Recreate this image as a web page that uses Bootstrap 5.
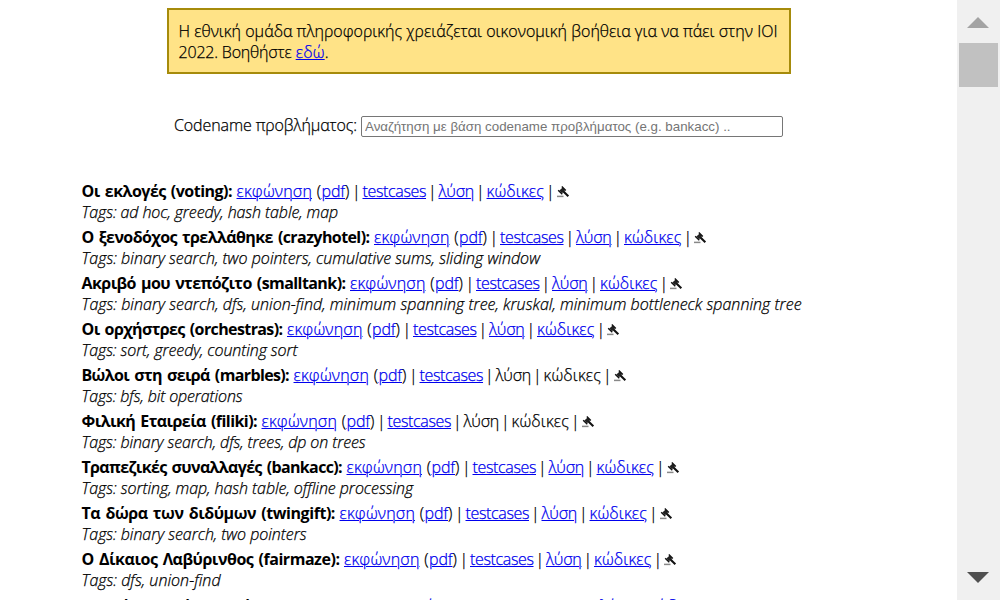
<!DOCTYPE html>
<html lang="el">
<head>
<meta charset="utf-8">
<title>Προβλήματα</title>
<meta name="viewport" content="width=device-width, initial-scale=1">
<link href="https://cdn.jsdelivr.net/npm/bootstrap@5.3.0/dist/css/bootstrap.min.css" rel="stylesheet">
<style>
body{font:300 16px/21px "Open Sans","Noto Sans",sans-serif;color:#000;background:#fff;-webkit-text-stroke:.25px}
.page{height:600px}
.content-area{width:957px}
.notice{width:624px;height:66px;margin:8px 0 0 167px;border:2px solid #a68b0b;background:#ffe387;padding:11px 9.5px}
a{color:#00e;text-underline-offset:1px;text-decoration-thickness:1px}
.fit{display:inline-block;white-space:pre}
.sep{display:inline-block;text-align:center;width:12.5px}
.search{margin:41px 0 0 174px;height:23px}
.search input{width:422px;height:21px;border:1px solid #767676;border-radius:2px;margin-top:1px;padding:1px 3px;font:13.333px "Liberation Sans",sans-serif;color:#000;-webkit-text-stroke:0}
.search input::placeholder{color:#757575;opacity:1}
.problems{margin:43px 0 0 81.5px}
.problems li{height:46px}
.problems li:last-child{padding-top:1px}
.line{height:21px}
.line b{font-weight:700;word-spacing:1.5px;-webkit-text-stroke:0}
.tags{height:21px;font-style:italic}
.gavel{width:13px;height:12px;margin:5px 0 0 0}
.bar{width:43px;background:#f0f0f0;padding:17px 0}
.arrow{margin-right:1px}
.thumb{width:39px;height:44px;background:#c1c1c1;margin-top:15px}
</style>
</head>
<body>
<div class="page d-flex overflow-hidden">
  <main class="content-area flex-shrink-0">
    <div class="notice"><span class="fit" data-w="599">Η εθνική ομάδα πληροφορικής χρειάζεται οικονομική βοήθεια για να πάει στην ΙΟΙ</span><br><span class="fit" data-w="113">2022. Βοηθήστε</span> <a href="#" class="fit" data-w="29">εδώ</a>.</div>
    <div class="search d-flex"><label class="fit" for="q" data-w="183">Codename προβλήματος:</label><input id="q" class="ms-1" placeholder="Αναζήτηση με βάση codename προβλήματος (e.g. bankacc) .."></div>
    <ul id="problems" class="problems list-unstyled mb-0"></ul>
  </main>
  <div class="bar d-flex flex-column align-items-center flex-shrink-0">
    <svg class="arrow" width="22" height="11" viewBox="0 0 22 11"><path d="M0 11L11 0L22 11Z" fill="#a3a3a3"/></svg>
    <div class="thumb"></div>
    <svg class="arrow mt-auto" width="22" height="11" viewBox="0 0 22 11"><path d="M0 0H22L11 11Z" fill="#505050"/></svg>
  </div>
</div>
<script src="https://cdn.jsdelivr.net/npm/bootstrap@5.3.0/dist/js/bootstrap.bundle.min.js"></script>
<script>
// title, title width, tags, tags width, has solution links
const rows = [
 ["Οι εκλογές (voting):",150.5,"Tags: ad hoc, greedy, hash table, map",256.5,1],
 ["Ο ξενοδόχος τρελλάθηκε (crazyhotel):",288,"Tags: binary search, two pointers, cumulative sums, sliding window",458.5,1],
 ["Ακριβό μου ντεπόζιτο (smalltank):",264,"Tags: binary search, dfs, union-find, minimum spanning tree, kruskal, minimum bottleneck spanning tree",720,1],
 ["Οι ορχήστρες (orchestras):",201,"Tags: sort, greedy, counting sort",216,1],
 ["Βώλοι στη σειρά (marbles):",207.5,"Tags: bfs, bit operations",161,0],
 ["Φιλική Εταιρεία (filiki):",175.5,"Tags: binary search, dfs, trees, dp on trees",284,0],
 ["Τραπεζικές συναλλαγές (bankacc):",260.5,"Tags: sorting, map, hash table, offline processing",331.5,1],
 ["Τα δώρα των διδύμων (twingift):",253.5,"Tags: binary search, two pointers",225,1],
 ["Ο Δίκαιος Λαβύρινθος (fairmaze):",258,"Tags: dfs, union-find",139,1],
 ["Το διάσημο δίκτυο φίλων (bestfriendlk):",311.5,"Tags: dp",60,1]
];
const gavel = '<svg class="gavel" viewBox="0 0 13 12"><path d="M0 10.4H6.5" stroke="#888" stroke-width="1.5"/><path d="M5.5 4.4L11.3 10.2" stroke="#111" stroke-width="2.1"/><path d="M2.4 4.4L5.6 1.6L8 4.2L5 7.2Z" fill="#222"/><path d="M1.2 4.2L5.3 8.3M4.8 .6L8.8 4.6" stroke="#111" stroke-width="1.4"/></svg>';
const seg = (t,w,tag) => `<${tag}${tag==='a'?' href="#"':''} class="fit" data-w="${w}">${t}</${tag}>`;
const sep = '<span class="sep">|</span>';
document.getElementById('problems').innerHTML = rows.map(([t,w,g,gw,s]) => {
  const k = s ? 'a' : 'span';
  return `<li><div class="line d-flex">${seg(t,w,'b')}${seg(' ',4.5,'span')}${seg('εκφώνηση',75.5,'a')}${seg(' (',9.5,'span')}${seg('pdf',23.5,'a')}${seg(')',5,'span')}${sep}${seg('testcases',63.5,'a')}${sep}${seg('λύση',35.5,k)}${sep}${seg('κώδικες',57.5,k)}${sep}${gavel}</div><div class="tags">${seg(g,gw,'span')}</div></li>`;
}).join('');
// Spread each run of text over its set width
document.querySelectorAll('.fit').forEach(e => {
  const w = +e.dataset.w, n = e.textContent.length;
  e.style.letterSpacing = ((w - e.getBoundingClientRect().width) / n) + 'px';
});
</script>
</body>
</html>
